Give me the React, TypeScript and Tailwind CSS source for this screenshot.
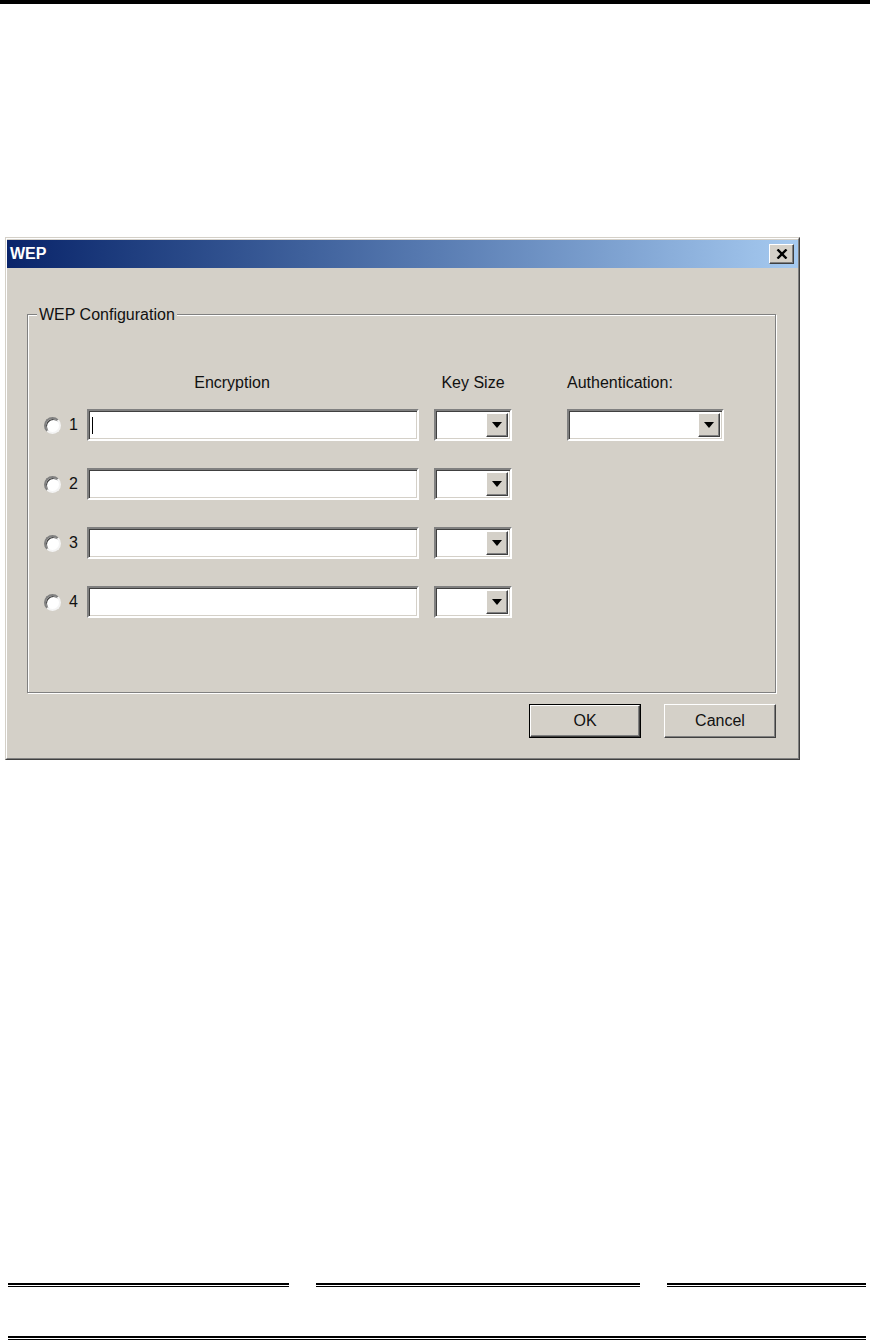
import React from "react";

const font = { fontFamily: '"Liberation Sans", Arial, sans-serif' };

const Radio = () => (
  <div className="w-[17px] h-[17px] rounded-full bg-white border-2 border-t-[#808080] border-l-[#808080] border-r-[#f4f4f4] border-b-[#f4f4f4] shadow-[inset_1px_1px_0_#404040]" />
);

const Sunken: React.FC<{ className?: string; children?: React.ReactNode }> = ({ className = "", children }) => (
  <div
    className={`h-[32px] bg-white border-2 border-t-[#808080] border-l-[#808080] border-b-white border-r-white shadow-[inset_1px_1px_0_#404040,inset_-1px_-1px_0_#d4d0c8] flex items-center ${className}`}
  >
    {children}
  </div>
);

const Dropdown: React.FC<{ className?: string }> = ({ className = "" }) => (
  <Sunken className={`justify-end pr-[2px] ${className}`}>
    <div className="w-[22px] h-[24px] bg-[#d4d0c8] border border-t-white border-l-white border-b-[#404040] border-r-[#404040] shadow-[inset_-1px_-1px_0_#808080] flex items-center justify-center">
      <svg width="10" height="6" viewBox="0 0 10 6">
        <path d="M0 0h10L5 6z" fill="#000" />
      </svg>
    </div>
  </Sunken>
);

const rows = [1, 2, 3, 4];

export default function App() {
  return (
    <div className="w-[870px] h-[1341px] bg-white overflow-hidden" style={font}>
      <div className="h-[4px] bg-black" />

      {/* dialog */}
      <div className="mt-[233px] ml-[5px] w-[795px] bg-[#d4d0c8] border border-t-[#d4d0c8] border-l-[#d4d0c8] border-r-[#404040] border-b-[#404040]">
        <div className="border border-t-white border-l-white border-r-[#808080] border-b-[#808080] pt-[1px]">
          <div className="h-[28px] bg-gradient-to-r from-[#0a246a] to-[#a6caf0] flex items-center justify-between pl-[3px] pr-[4px]">
            <span className="text-white font-bold text-[16px]">WEP</span>
            <div className="w-[25px] h-[20px] bg-[#d4d0c8] border border-t-white border-l-white border-b-[#404040] border-r-[#404040] shadow-[inset_-1px_-1px_0_#808080] flex items-center justify-center">
              <svg width="12" height="10" viewBox="0 0 12 10">
                <path d="M1.5 0.5l9 9M10.5 0.5l-9 9" stroke="#000" strokeWidth="2.4" />
              </svg>
            </div>
          </div>

          <div className="pl-[20px] pr-[22px] pb-[20px]">
            <fieldset className="mt-[36px] h-[389px] border border-[#808080] shadow-[inset_1px_1px_0_#fff,1px_1px_0_#fff]">
              <legend className="ml-[9px] px-[2px] text-[16px] leading-[18px] pt-[2px] text-[#111] bg-[#d4d0c8]">
                WEP Configuration
              </legend>

              <div className="pt-[50px] text-[16px] text-[#111]">
                <div className="flex h-[18px] leading-[18px] pl-[59px]">
                  <div className="w-[290px] text-center">Encryption</div>
                  <div className="ml-[57px] w-[78px] text-center">Key Size</div>
                  <div className="ml-[55px]">Authentication:</div>
                </div>

                <div className="mt-[17px] flex flex-col gap-[27px]">
                  {rows.map((n) => (
                    <div key={n} className="flex items-center pl-[16px]">
                      <Radio />
                      <span className="w-[26px] pl-[8px]">{n}</span>
                      <Sunken className="w-[332px] pl-[3px]">
                        {n === 1 && <div className="w-[1px] h-[17px] bg-black" />}
                      </Sunken>
                      <Dropdown className="ml-[15px] w-[78px]" />
                      {n === 1 && <Dropdown className="ml-[55px] w-[157px]" />}
                    </div>
                  ))}
                </div>
              </div>
            </fieldset>

            <div className="mt-[11px] flex justify-end gap-[23px] text-[16px] text-[#111]">
              <div className="w-[112px] h-[34px] border border-black">
                <div className="w-full h-full bg-[#d4d0c8] border border-t-white border-l-white border-b-[#404040] border-r-[#404040] shadow-[inset_-1px_-1px_0_#808080] flex items-center justify-center">
                  OK
                </div>
              </div>
              <div className="w-[112px] h-[34px] bg-[#d4d0c8] border border-t-white border-l-white border-b-[#404040] border-r-[#404040] shadow-[inset_-1px_-1px_0_#808080] flex items-center justify-center">
                Cancel
              </div>
            </div>
          </div>
        </div>
      </div>

      {/* footer rules */}
      <div className="mt-[523px] flex pl-[8px] gap-[27px]">
        {[281, 324, 199].map((w) => (
          <div key={w} style={{ width: w }}>
            <div className="h-[2px] bg-black" />
            <div className="h-[1px] mt-[1px] bg-black" />
          </div>
        ))}
      </div>
      <div className="mt-[49px] ml-[8px] w-[858px]">
        <div className="h-[2px] bg-black" />
        <div className="h-[1px] mt-[1px] bg-black" />
      </div>
    </div>
  );
}
